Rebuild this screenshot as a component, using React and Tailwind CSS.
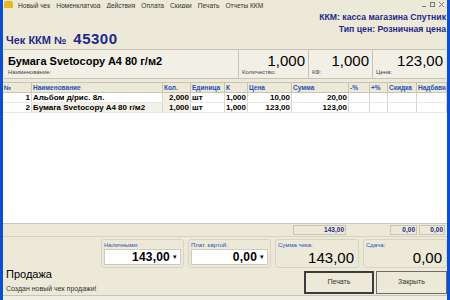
import React from 'react';

const menu = ['Новый чек', 'Номенклатура', 'Действия', 'Оплата', 'Скидки', 'Печать', 'Отчеты ККМ'];

const cols = [
  { name: '№', w: 'w-[29px]', align: 'text-right' },
  { name: 'Наименование', w: 'w-[131px]', align: 'text-left' },
  { name: 'Кол.', w: 'w-[28px]', align: 'text-right' },
  { name: 'Единица', w: 'w-[34px]', align: 'text-left' },
  { name: 'К', w: 'w-[23px]', align: 'text-left' },
  { name: 'Цена', w: 'w-[44px]', align: 'text-right' },
  { name: 'Сумма', w: 'w-[57px]', align: 'text-right' },
  { name: '-%', w: 'w-[21px]', align: 'text-right' },
  { name: '+%', w: 'w-[18px]', align: 'text-right' },
  { name: 'Скидка', w: 'w-[29px]', align: 'text-right' },
  { name: 'Надбавка', w: 'flex-1', align: 'text-left' },
];

const rows = [
  ['1', 'Альбом  д/рис.  8л.', '2,000', 'шт', '1,000', '10,00', '20,00', '', '', '', ''],
  ['2', 'Бумага Svetocopy A4 80 г/м2', '1,000', 'шт', '1,000', '123,00', '123,00', '', '', '', ''],
];

function Field({ label, value, className }) {
  return (
    <div className={`flex flex-col justify-between border-l border-[#c9c5b2] px-[3px] pt-[3px] pb-[2px] ${className}`}>
      <div className="text-right text-[15px] leading-[16px] text-black">{value}</div>
      <div className="text-[6px] leading-[7px] text-[#444]">{label}</div>
    </div>
  );
}

function Combo({ label, value, className }) {
  return (
    <div className={`flex flex-col rounded-[3px] border border-[#d8d4c4] px-[2px] pt-[1px] pb-[2px] ${className}`}>
      <div className="text-[6px] leading-[8px] text-[#2850b8]">{label}</div>
      <div className="flex h-[16px] items-center border border-[#d0ccbc] bg-white">
        <div className="flex-1 text-right text-[12px] font-bold leading-[14px] tracking-[0.2px] text-black">{value}</div>
        <div className="flex w-[10px] items-center justify-center text-[7px] text-black">▾</div>
      </div>
    </div>
  );
}

export default function App() {
  return (
    <div className="flex h-[300px] w-[450px] overflow-hidden bg-[#ece9d8] font-['Liberation_Sans',Arial,sans-serif]">
      <div className="w-[3px] bg-[#0a4ed8]" />
      <div className="flex min-w-0 flex-1 flex-col">
        {/* menu */}
        <div className="flex h-[8px] shrink-0 items-end overflow-hidden">
          <div className="-mb-[1px] ml-[1px] h-[8px] w-[9px] rounded-[2px] bg-[#e8b820]" />
          <div className="-mb-[2px] flex flex-1 gap-[6px] pl-[5px] text-[6.6px] leading-[9px] text-[#333]">
            {menu.map((m) => (
              <span key={m}>{m}</span>
            ))}
          </div>
          <div className="flex items-end gap-[4px] pr-[3px] pb-[1px]">
            <div className="h-[1px] w-[4px] bg-[#777]" />
            <div className="h-[5px] w-[5px] border border-[#777]" />
            <svg width="5" height="5" viewBox="0 0 5 5" className="text-[#777]">
              <path d="M0 0L5 5M5 0L0 5" stroke="currentColor" strokeWidth="1" />
            </svg>
          </div>
        </div>

        {/* header */}
        <div className="flex h-[41px] shrink-0 justify-between">
          <div className="flex items-end gap-[7px] pb-[2px] pl-[3px] font-bold text-[#1e2a8c]">
            <span className="text-[11px] leading-[13px]">Чек ККМ №</span>
            <span className="text-[15px] leading-[16px] tracking-[0.5px]">45300</span>
          </div>
          <div className="flex flex-col items-end pt-[3px] pr-[1px] text-[8.7px] font-bold leading-[12px] text-[#1e2a8c]">
            <span>ККМ: касса магазина Спутник</span>
            <span>Тип цен: Розничная цена</span>
          </div>
        </div>

        {/* product panel */}
        <div className="mx-[1px] flex h-[30px] shrink-0 border-y border-[#c9c5b2] bg-[#f2f0e6]">
          <div className="flex w-[234px] flex-col justify-between px-[4px] pt-[5px] pb-[2px]">
            <div className="text-[11px] font-bold leading-[12px] text-black">Бумага Svetocopy A4 80 г/м2</div>
            <div className="text-[6px] leading-[7px] text-[#444]">Наименование:</div>
          </div>
          <Field label="Количество:" value="1,000" className="w-[70px]" />
          <Field label="КФ:" value="1,000" className="w-[64px]" />
          <Field label="Цена:" value="123,00" className="flex-1" />
        </div>

        {/* table */}
        <div className="mt-[3px] flex min-h-0 flex-1 flex-col bg-white">
          <div className="flex h-[11px] border-y border-[#c9c5b2] bg-[#ece9d8]">
            {cols.map((c) => (
              <div key={c.name} className={`${c.w} overflow-hidden whitespace-nowrap border-r border-[#c9c5b2] px-[1px] text-[6.5px] font-bold leading-[10px] text-[#2850b8]`}>
                {c.name}
              </div>
            ))}
          </div>
          {rows.map((r, i) => (
            <div key={i} className="flex h-[10px] border-b border-[#ebe9e0]">
              {r.map((v, j) => (
                <div
                  key={j}
                  className={`${cols[j].w} ${cols[j].align} overflow-hidden whitespace-nowrap border-r border-[#d8d6cc] px-[1px] text-[8px] font-bold leading-[10px] text-black ${
                    (j === 2 || (i === 1 && j === 1)) ? 'bg-[#f3f1e7]' : ''
                  }`}
                >
                  {v}
                </div>
              ))}
            </div>
          ))}
        </div>

        {/* totals row */}
        <div className="flex h-[13px] shrink-0 items-start border-t border-[#c9c5b2] pt-[1px]">
          <div className="w-[290px]" />
          <div className="w-[53px] border border-[#c9c5b2] pr-[1px] text-right text-[6.5px] font-bold leading-[8px] text-[#1e2a8c]">143,00</div>
          <div className="w-[44px]" />
          <div className="w-[27px] border border-[#c9c5b2] pr-[1px] text-right text-[6.5px] font-bold leading-[8px] text-[#1e2a8c]">0,00</div>
          <div className="w-[2px]" />
          <div className="w-[26px] border border-[#c9c5b2] pr-[1px] text-right text-[6.5px] font-bold leading-[8px] text-[#1e2a8c]">0,00</div>
        </div>

        {/* bottom */}
        <div className="flex h-[59px] shrink-0 border-t border-[#d8d4c4] pt-[2px]">
          <div className="flex w-[98px] flex-col justify-end pb-[2px] pl-[3px]">
            <div className="text-[11px] leading-[13px] text-black">Продажа</div>
            <div className="mt-[3px] text-[7px] leading-[9px] text-[#333]">Создан новый чек продажи!</div>
          </div>
          <div className="flex flex-1 flex-col">
            <div className="flex h-[29px] gap-[4px]">
              <Combo label="Наличными:" value="143,00" className="w-[83px]" />
              <Combo label="Плат. картой:" value="0,00" className="w-[83px]" />
              <div className="flex w-[84px] flex-col rounded-[3px] border border-[#d8d4c4] px-[2px] pt-[1px]">
                <div className="text-[6px] leading-[8px] text-[#2850b8]">Сумма чека:</div>
                <div className="pr-[2px] text-right text-[15px] leading-[17px] text-black">143,00</div>
              </div>
              <div className="flex flex-1 flex-col rounded-[3px] border border-[#d8d4c4] px-[2px] pt-[1px]">
                <div className="text-[6px] leading-[8px] text-[#2850b8]">Сдача:</div>
                <div className="pr-[2px] text-right text-[15px] leading-[17px] text-black">0,00</div>
              </div>
            </div>
            <div className="mt-[3px] flex justify-end gap-[2px]">
              <div className="flex h-[23px] w-[70px] items-center justify-center border-2 border-[#3c3c3c] text-[7px] text-[#333]">Печать</div>
              <div className="flex h-[23px] w-[71px] items-center justify-center border border-[#6c6c6c] text-[7px] text-[#333]">Закрыть</div>
            </div>
          </div>
        </div>
        <div className="h-[5px] shrink-0 border-t border-[#c9c5b2] bg-[#f0eee4]" />
      </div>
      <div className="w-[3px] bg-[#0a4ed8]" />
    </div>
  );
}
